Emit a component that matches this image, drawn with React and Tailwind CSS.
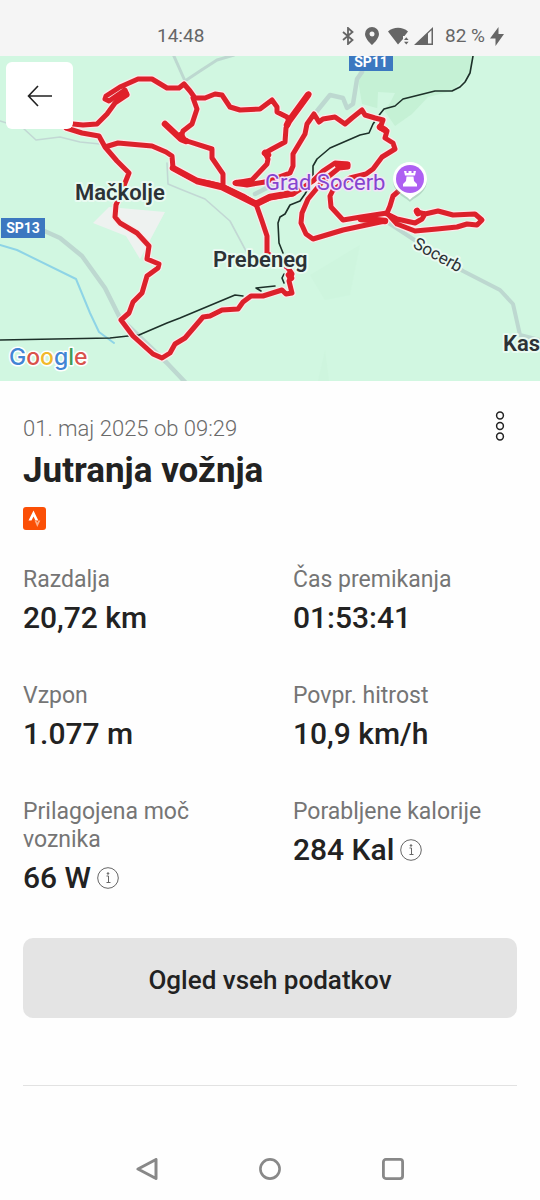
import { useState } from 'react';

// Recorded GPS track, drawn as separate segments
const track = [
  'M66 128L82 133L99 136L105 147L118 143L152 146L166 152L172 156L173 168L180 172L197 181L209 183L222 186L243 196L256 204L262 221L267 236V253L288 268L292 274L289 281L292 293L286 294L282 290L263 296H251L243 302L238 309L222 310L210 316L203 317L185 338L175 344L170 353L162 358L153 354L133 336L121 320L129 313L133 302L142 293L147 276L158 268L159 264L147 259L149 246L137 233L120 223L115 217L116 205L125 183L129 173L117 161L105 147',
  'M73 124L83 125L97 124L107 114L115 103L127 95L125 90L109 101L105 99L106 96L120 87L138 79H152L167 88L179 88L184 84L190 91L195 98H205L215 94L222 95L230 107L240 110L260 109L272 100L277 107V112L287 117L289 121L309 94L289 121L286 128L285 142L272 149L265 153L268 159L267 164L252 180L235 183L247 185L265 182L290 173L293 166V154L305 134L307 124L314 114L319 122L323 119L335 117L345 124L352 118L362 110L365 115L375 118L383 120L380 128L387 131L385 138L393 143L395 149L382 157L373 169L366 174L350 178L333 190L330 196L331 207L343 220L361 217L387 213L390 206L393 196L401 189',
  'M165 124L181 139L187 141L212 149V158L223 174V186',
  'M182 134L183 131L192 124L197 109L193 98',
  'M256 204L270 198L293 194L313 181L323 171L335 163L348 164V167L339 168L323 181L308 199L302 213L301 223L306 234L313 239L343 230L385 221L361 218',
  'M387 213L397 224L415 231L437 229L457 227L467 224L477 225L482 220L475 214L453 215L438 211L425 214L417 212M425 214L422 219L415 223L397 219L387 214',
];

const thickTrack = [
  'M126 94L117 99M165 124L181 139L186 141M308 95L289 121L287 125M237 183H250',
  'M173 168L197 181L222 187L256 204L270 197L293 193M181 135L183 139M338 165H347M361 219L385 221',
  'M265 153L268 155M289 275L291 278M380 127L385 130M417 211L418 213',
];

const thinRoads = [
  'M0 121L23 128L36 140L60 137L80 142L100 144',
  'M167 163L168 184L180 189L205 199L230 221L246 251',
];

const railways = [
  'M473 56L470 73L465 82L460 87L452 91H435L403 99L395 106L384 109L380 114L373 124L369 133L360 135L330 148L317 159L313 166V179L305 194L300 201L290 205L285 214L280 217L278 223L279 243L283 253',
  'M284 274L282 278L284 283M275 286L256 288L261 291',
  'M243 296L235 295L180 318L167 323L139 335L128 336L110 338L0 340',
];

const stats = [
  { id: 'distance', label: 'Razdalja', value: '20,72 km' },
  { id: 'time', label: 'Čas premikanja', value: '01:53:41' },
  { id: 'climb', label: 'Vzpon', value: '1.077 m' },
  { id: 'speed', label: 'Povpr. hitrost', value: '10,9 km/h' },
  { id: 'power', label: 'Prilagojena moč voznika', value: '66 W', info: true },
  { id: 'calories', label: 'Porabljene kalorije', value: '284 Kal', info: true },
];

function StatusBar() {
  return (
    <header className="flex h-14 items-center justify-between bg-[#f5f5f5] pt-4 pr-9 pl-[157px] text-[#666]">
      <span className="text-[19px] leading-6">14:48</span>
      <div className="flex items-center">
        <svg width="12" height="18" viewBox="0 0 12 18" className="mr-[11px]" fill="none" stroke="currentColor" strokeWidth="1.8">
          <path d="M1 5l9.500 8L6 17V1l4.500 4L1 13" />
        </svg>
        <svg width="14" height="18" viewBox="0 0 14 18" className="mr-[9px]" fill="currentColor">
          <path fillRule="evenodd" d="M7 0a7 7 0 0 0-7 7c0 5 7 11 7 11s7-6 7-11a7 7 0 0 0-7-7zm0 4.500a2.500 2.500 0 1 1 0 5 2.500 2.500 0 0 1 0-5z" />
        </svg>
        <svg width="21" height="18" viewBox="0 0 21 18" className="mr-[5px]" fill="currentColor">
          <path d="M0 4.500C5.500-.5 14.500-.5 20 4.500L16.500 9H15v3l-5 5.500z" />
          <path d="M16 13l2.300-2.700 2.300 2.700zM16 14.800l2.300 2.700 2.300-2.700z" />
        </svg>
        <svg width="19" height="18" viewBox="0 0 19 18" className="mr-3" fill="currentColor">
          <path fillRule="evenodd" d="M0 18L19 0V18zM14 6.500V16.500H17.500V3.200z" />
        </svg>
        <span className="text-[19px] leading-6">82 %</span>
        <svg width="14" height="19" viewBox="0 0 14 19" className="ml-[5px]" fill="currentColor">
          <path d="M8.500 0v7H14L5.500 19v-7.500H0z" />
        </svg>
      </div>
    </header>
  );
}

function RouteMap() {
  return (
    <section className="relative h-[325px] overflow-hidden bg-[#d1f7e1]">
      <svg
        viewBox="0 56 540 325"
        preserveAspectRatio="xMidYMid slice"
        className="h-full w-full"
        fill="none"
        strokeLinejoin="round"
        strokeLinecap="round"
        role="img"
        aria-label="Zemljevid poti"
      >
        {/* terrain */}
        <path fill="#c5f1d5" d="M360 56H473L470 73L452 91L428 97L412 114L395 126L384 110L362 104L358 80z" />
        <path fill="#d1f7e1" d="M378 92L395 93L390 103L384 110L377 114z" />
        <path fill="#cef5de" d="M310 275L360 245L350 295L325 300zM318 381L325 350L329 381z" />
        <path fill="#eef2f0" d="M93 223L109 207L165 212L140 259L126 236z" />

        {/* roads and stream */}
        <g stroke="#c2d8d4" strokeWidth="1.6">
          {thinRoads.map((d) => <path key={d} d={d} />)}
        </g>
        <g stroke="#bdd8d0" strokeWidth="4.500">
          <path d="M40 229L60 238L82 256L105 288L120 318L167 363L185 382" />
          <path strokeWidth="3" d="M173 54L185 81L200 71L217 60L234 55" />
          <path d="M317 111L330 95L343 98L347 108L353 104L357 79L362 72M255 194L290 176" />
          <path strokeWidth="4" d="M387 222L413 239L463 271L500 290L513 304L520 335L540 340" />
        </g>
        <path stroke="#8ed4e6" strokeWidth="2" d="M0 245L17 250L76 279L90 313L99 332L114 343" />
        <g stroke="#1d3029" strokeWidth="1.6">
          {railways.map((d) => <path key={d} d={d} />)}
        </g>

        {/* the ride */}
        <g stroke="#fbe9ea" strokeWidth="7.500">
          {track.map((d) => <path key={d} d={d} />)}
        </g>
        <g stroke="#fbe9ea" strokeWidth="9">
          {thickTrack.map((d) => <path key={d} d={d} />)}
        </g>
        <g stroke="#dc212b" strokeWidth="5">
          {track.map((d) => <path key={d} d={d} />)}
        </g>
        <g stroke="#e01f29" strokeWidth="6.500">
          {thickTrack.map((d) => <path key={d} d={d} />)}
        </g>

        {/* road shields */}
        <path fill="#3c78c0" d="M349 52H393V71H349zM1 218H45V238H1z" />
        <g fill="#fff" fontSize="14" fontWeight="700" textAnchor="middle">
          <text x="371" y="67">SP11</text>
          <text x="23" y="233">SP13</text>
        </g>

        {/* place names */}
        <g fill="#2c3236" stroke="#e9faf1" strokeWidth="4" paintOrder="stroke" fontSize="22" fontWeight="600">
          <text x="75" y="200">Mačkolje</text>
          <text x="213" y="267">Prebeneg</text>
          <text x="503" y="351">Kas</text>
          <text fontSize="17" fontWeight="400" transform="translate(412 247) rotate(29)">Socerb</text>
        </g>
        <text x="265" y="190" fill="#8545cf" stroke="#f3e3f8" strokeWidth="3" paintOrder="stroke" fontSize="22">Grad Socerb</text>

        {/* castle pin */}
        <path fill="#8aa99b" fillOpacity="0.4" d="M410 202c-3-4-17-8-17-22a17 17 0 0 1 34 0c0 14-14 18-17 22z" />
        <path fill="#fff" d="M410 200c-3-5-17-8-17-21a17 17 0 0 1 34 0c0 13-14 16-17 21z" />
        <circle cx="410" cy="179" r="14" fill="#ae60f2" />
        <path fill="#fff" d="M404 171H406.500V173H408.500V171H411.500V173H413.500V171H416L415 175.500H405zM406.500 176.500H413.500L414 181L417 184V186.500H403V184L406 181z" />

        {/* map attribution */}
        <text x="9" y="365" stroke="#fff" strokeWidth="3" paintOrder="stroke" fontFamily="Inter" fontSize="23" fontWeight="500">
          <tspan fill="#4285d4">G</tspan>
          <tspan fill="#d9534a">o</tspan>
          <tspan fill="#f0b92b">o</tspan>
          <tspan fill="#4285d4">g</tspan>
          <tspan fill="#3f9d55">l</tspan>
          <tspan fill="#d9534a">e</tspan>
        </text>
      </svg>

      <button
        type="button"
        aria-label="Nazaj"
        className="absolute top-1.5 left-1.5 flex size-[67px] items-center justify-center rounded-md bg-white text-[#222]"
      >
        <svg width="26" height="22" viewBox="0 0 26 22" fill="none" stroke="currentColor" strokeWidth="1.6">
          <path d="M25 11H1.500M11 1L1.500 11L11 21" />
        </svg>
      </button>
    </section>
  );
}

function Stat({ label, value, info }) {
  return (
    <div>
      <dt className="text-[23px] leading-7 text-[#757575]">{label}</dt>
      <dd className="mt-1 flex items-center gap-1.5 text-[30px] leading-10 font-medium">
        {value}
        {info && (
          <button type="button" aria-label={`${label} – več informacij`}>
            <svg width="22" height="22" viewBox="0 0 22 22" fill="none" stroke="#666" strokeWidth="1">
              <circle cx="11" cy="11" r="10.300" />
              <path d="M9.500 9H11.500V15.500M9.500 15.500H13.500" />
              <circle cx="11" cy="6.500" r="0.800" fill="#666" />
            </svg>
          </button>
        )}
      </dd>
    </div>
  );
}

function SystemNav() {
  return (
    <nav className="mt-auto flex justify-center gap-[101px] pb-5 text-[#888]">
      <button type="button" aria-label="Nazaj">
        <svg width="22" height="22" viewBox="0 0 22 22" fill="none" stroke="currentColor" strokeWidth="3" strokeLinejoin="round">
          <path d="M20 1.500V20.500L2 11z" />
        </svg>
      </button>
      <button type="button" aria-label="Domov">
        <svg width="22" height="22" viewBox="0 0 22 22" fill="none" stroke="currentColor" strokeWidth="2.600">
          <circle cx="11" cy="11" r="9.600" />
        </svg>
      </button>
      <button type="button" aria-label="Nedavno">
        <svg width="22" height="22" viewBox="0 0 22 22" fill="none" stroke="currentColor" strokeWidth="2.800">
          <rect x="1.400" y="1.400" width="19.200" height="19.200" rx="2.500" />
        </svg>
      </button>
    </nav>
  );
}

export default function App() {
  const [menuOpen, setMenuOpen] = useState(false);

  return (
    <div className="flex min-h-screen flex-col bg-[#fefefe] font-['Roboto',sans-serif] text-[#222]">
      <StatusBar />
      <RouteMap />

      <main className="px-[23px] pt-[34px]">
        <div className="flex items-start justify-between">
          <p className="text-[22px] leading-7 font-light text-[#6a6a6a]">01. maj 2025 ob 09:29</p>
          <button
            type="button"
            aria-label="Možnosti"
            aria-expanded={menuOpen}
            onClick={() => setMenuOpen(!menuOpen)}
            className="mr-3"
          >
            <svg width="10" height="30" viewBox="0 0 10 30" className="-mt-1" fill="none" stroke="currentColor" strokeWidth="1.500">
              <circle cx="5" cy="4.500" r="3.400" />
              <circle cx="5" cy="15" r="3.400" />
              <circle cx="5" cy="25.500" r="3.400" />
            </svg>
          </button>
        </div>
        <h1 className="mt-2 text-[35px] leading-10 font-bold">Jutranja vožnja</h1>

        <a href="#strava" aria-label="Strava" className="mt-4 block size-[23px]">
          <svg width="23" height="23" viewBox="0 0 23 23">
            <rect width="23" height="23" rx="3" fill="#fb4f06" />
            <path fill="#fff" d="M10.500 3.500L5.500 13.500H8.500L10.500 9.500L12.500 13.500H15.300z" />
            <path fill="#fdb08c" d="M11.500 13.500H13.200L14.300 15.700L15.400 13.500H17.300L14.300 20z" />
          </svg>
        </a>

        <dl className="mt-9 grid grid-cols-2 gap-x-[46px] gap-y-11">
          {stats.map(({ id, ...stat }) => <Stat key={id} {...stat} />)}
        </dl>

        <button type="button" className="mt-10 h-20 w-full rounded-[10px] bg-[#e4e4e4] pt-1 text-[26px] font-medium">
          Ogled vseh podatkov
        </button>
        <hr className="mt-[67px] border-[#e2e2e2]" />
      </main>

      <SystemNav />
    </div>
  );
}
